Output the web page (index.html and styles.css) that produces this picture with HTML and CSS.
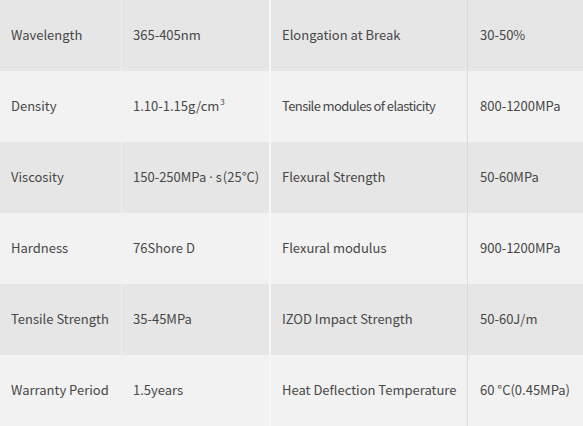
FILE: index.html
```html
<!DOCTYPE html>
<html>
<head>
<meta charset="utf-8">
<link rel="stylesheet" href="styles.css">
</head>
<body>
<div class="spec">
  <div class="row dark">
    <div class="cell c1">Wavelength</div><div class="cell c2">365-405nm</div>
    <div class="gap"></div>
    <div class="cell c3">Elongation at Break</div><div class="cell c4">30-50%</div>
  </div>
  <div class="row light">
    <div class="cell c1">Density</div><div class="cell c2">1.10-1.15g/cm<sup>3</sup></div>
    <div class="gap"></div>
    <div class="cell c3 tight">Tensile modules of elasticity</div><div class="cell c4">800-1200MPa</div>
  </div>
  <div class="row dark">
    <div class="cell c1">Viscosity</div><div class="cell c2">150-250MPa<span class="dot">·</span>s<span class="paren">(25°C)</span></div>
    <div class="gap"></div>
    <div class="cell c3">Flexural Strength</div><div class="cell c4">50-60MPa</div>
  </div>
  <div class="row light">
    <div class="cell c1">Hardness</div><div class="cell c2">76Shore D</div>
    <div class="gap"></div>
    <div class="cell c3">Flexural modulus</div><div class="cell c4">900-1200MPa</div>
  </div>
  <div class="row dark">
    <div class="cell c1">Tensile Strength</div><div class="cell c2">35-45MPa</div>
    <div class="gap"></div>
    <div class="cell c3">IZOD Impact Strength</div><div class="cell c4">50-60J/m</div>
  </div>
  <div class="row light">
    <div class="cell c1">Warranty Period</div><div class="cell c2">1.5years</div>
    <div class="gap"></div>
    <div class="cell c3">Heat Deflection Temperature</div><div class="cell c4">60 °C(0.45MPa)</div>
  </div>
</div>
</body>
</html>
```
FILE: styles.css
```css
html, body {
  margin: 0;
  padding: 0;
  background: #f2f2f2;
}
.spec {
  width: 583px;
  font-family: "Noto Sans CJK SC", "Noto Sans", sans-serif;
  font-size: 13px;
  font-weight: 400;
  color: #474747;
}
.row {
  display: grid;
  grid-template-columns: 121px 148px 2px 196px 116px;
  height: 71px;
}
.row.dark { background: #e6e6e6; }
.row.light { background: #f2f2f2; }
.cell {
  display: flex;
  align-items: center;
  box-sizing: border-box;
  white-space: nowrap;
  padding-bottom: 2px;
}
.c1 { padding-left: 11px; }
.c2 { padding-left: 11px; border-left: 1px solid #efefef; }
.c3 { padding-left: 11px; }
.c4 { padding-left: 12px; border-left: 1px solid #dadada; }
.gap { background: #f7f7f7; }
.tight { letter-spacing: -0.6px; word-spacing: 0; }
.dot {
  font-family: "Noto Sans", sans-serif;
  margin: 0 3px;
}
.paren { margin-left: 1px; }
sup {
  font-size: 8px;
  align-self: flex-start;
  margin-top: 25px;
  margin-left: 1px;
}
```
